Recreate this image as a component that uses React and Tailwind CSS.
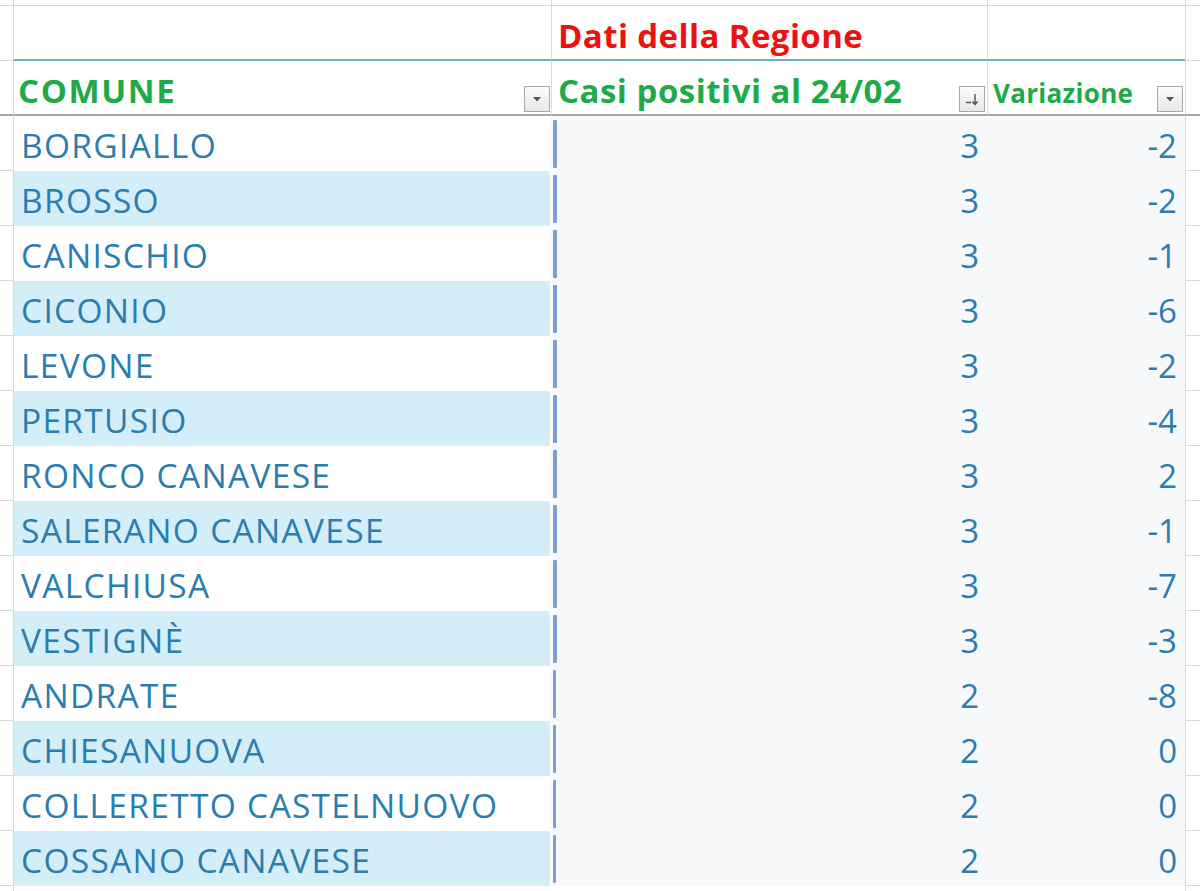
import React from "react";

const rows = [
  ["BORGIALLO", 3, -2],
  ["BROSSO", 3, -2],
  ["CANISCHIO", 3, -1],
  ["CICONIO", 3, -6],
  ["LEVONE", 3, -2],
  ["PERTUSIO", 3, -4],
  ["RONCO CANAVESE", 3, 2],
  ["SALERANO CANAVESE", 3, -1],
  ["VALCHIUSA", 3, -7],
  ["VESTIGNÈ", 3, -3],
  ["ANDRATE", 2, -8],
  ["CHIESANUOVA", 2, 0],
  ["COLLERETTO CASTELNUOVO", 2, 0],
  ["COSSANO CANAVESE", 2, 0],
  ["", null, null],
];

function DropBtn({ sort }) {
  return (
    <div className="w-[26px] h-[26px] border border-[#a9a9a9] bg-gradient-to-b from-[#fbfbfb] to-[#e8e8e8] flex items-center justify-center">
      {sort ? (
        <svg width="18" height="16" viewBox="0 0 18 16">
          <line x1="3" y1="11.5" x2="8" y2="11.5" stroke="#555" strokeWidth="1.5" />
          <line x1="12" y1="3" x2="12" y2="13" stroke="#444" strokeWidth="1.3" />
          <path d="M9.5 10.5 L12 13.5 L14.5 10.5" fill="none" stroke="#444" strokeWidth="1.3" />
        </svg>
      ) : (
        <svg width="12" height="8" viewBox="0 0 12 8">
          <path d="M2 2 L10 2 L6 6.5 Z" fill="#555" />
        </svg>
      )}
    </div>
  );
}

export default function App() {
  return (
    <div
      className="w-[1200px] h-[891px] overflow-hidden bg-white"
      style={{ fontFamily: "'Open Sans', Lato, 'Liberation Sans', sans-serif" }}
    >
      <div className="grid grid-cols-[13px_538px_436px_198px_15px]">
        {/* top strip */}
        <div className="h-[6px] border-b border-[#d9d9d9]" />
        <div className="h-[6px] border-l border-b border-[#d9d9d9]" />
        <div className="h-[6px] border-l border-b border-[#d9d9d9]" />
        <div className="h-[6px] border-l border-b border-[#d9d9d9]" />
        <div className="h-[6px] border-l border-b border-[#d9d9d9]" />

        {/* header row 1 */}
        <div className="h-[55px] border-b border-[#d9d9d9]" />
        <div className="h-[55px] border-l border-[#d9d9d9] border-b-2 border-b-[#6aaed6]" />
        <div className="h-[55px] border-l border-[#d9d9d9] border-b-2 border-b-[#6aaed6] flex items-center pl-[6px] pt-[6px]">
          <span className="text-[#ee1111] font-bold text-[33px] leading-none tracking-[0.4px]">
            Dati della Regione
          </span>
        </div>
        <div className="h-[55px] border-l border-[#d9d9d9] border-b-2 border-b-[#6aaed6]" />
        <div className="h-[55px] border-l border-b border-[#d9d9d9]" />

        {/* header row 2 */}
        <div className="h-[55px] border-b-2 border-[#a6a6a6]" />
        <div className="h-[55px] border-l border-[#d9d9d9] border-b-2 border-b-[#a6a6a6] flex items-end justify-between pl-[4px] pb-[2px] pr-[1px]">
          <span className="text-[#1faa48] font-bold text-[33px] leading-none mb-[5px] tracking-[1.6px]">COMUNE</span>
          <DropBtn />
        </div>
        <div className="h-[55px] border-l border-[#d9d9d9] border-b-2 border-b-[#a6a6a6] flex items-end justify-between pl-[6px] pb-[2px] pr-[2px]">
          <span className="text-[#1faa48] font-bold text-[33px] leading-none mb-[5px] tracking-[0.5px]">Casi positivi al 24/02</span>
          <DropBtn sort />
        </div>
        <div className="h-[55px] border-l border-[#d9d9d9] border-b-2 border-b-[#a6a6a6] flex items-end justify-between pl-[5px] pb-[2px] pr-[2px]">
          <span className="text-[#1faa48] font-bold text-[26px] leading-none mb-[6px] tracking-[0.3px]">Variazione</span>
          <DropBtn />
        </div>
        <div className="h-[55px] border-l border-[#d9d9d9] border-b-2 border-b-[#a6a6a6]" />

        {/* data rows */}
        {rows.map(([name, pos, vari], i) => (
          <React.Fragment key={i}>
            <div className="h-[55px] border-b border-[#d9d9d9]" />
            <div className="h-[55px] border-l border-[#d9d9d9] flex">
              <div
                className={`h-full w-[536px] flex items-center pl-[7px] pt-[4px] ${
                  i % 2 === 1 && name ? "bg-[#d3edf9]" : ""
                }`}
              >
                <span className="text-[#2a7dae] text-[33.5px] leading-none tracking-[1.3px]">{name}</span>
              </div>
            </div>
            <div className={`h-[55px] flex items-center ${name ? "bg-[#f6f8f9]" : ""}`}>
              {pos !== null && (
                <div className="flex items-center w-full h-full pr-[8px]">
                  <div
                    className={`${pos === 3 ? "w-[4px]" : "w-[3px]"} h-[48px] ml-[2px] bg-[#7e9ecd] rounded-[1px]`}
                  />
                  <span className="ml-auto text-[#2a7dae] text-[33px] leading-none pt-[4px]">{pos}</span>
                </div>
              )}
            </div>
            <div className={`h-[55px] flex items-center justify-end pr-[8px] ${name ? "bg-[#f6f8f9]" : ""}`}>
              {vari !== null && (
                <span className="text-[#2a7dae] text-[33px] leading-none pt-[4px]">{vari}</span>
              )}
            </div>
            <div className="h-[55px] border-l border-b border-[#d9d9d9]" />
          </React.Fragment>
        ))}
      </div>
    </div>
  );
}
